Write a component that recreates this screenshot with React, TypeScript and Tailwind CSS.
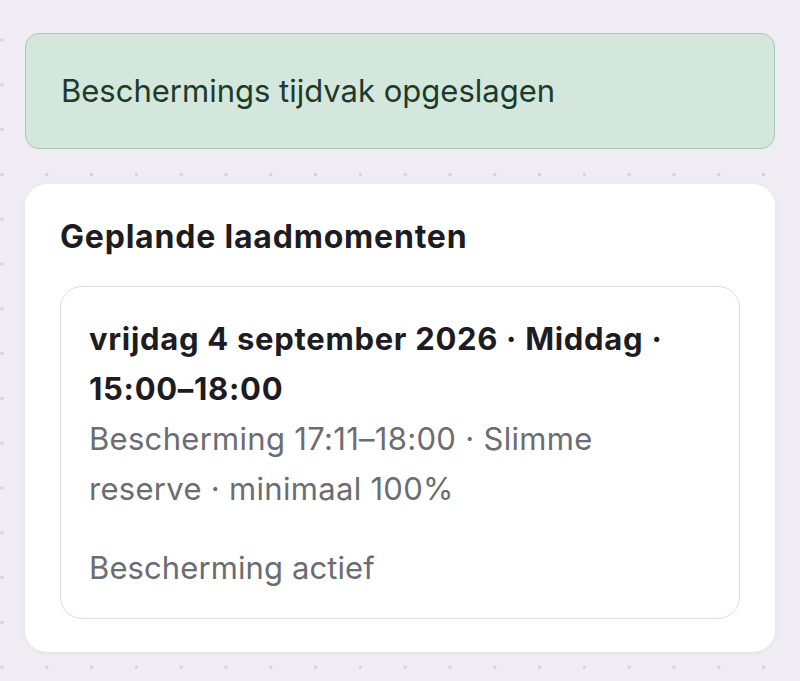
import React from "react";

export default function App() {
  return (
    <div
      className="min-h-screen w-full bg-[#efedf3] bg-[radial-gradient(circle,#d5d2da_1.4px,transparent_1.9px)] bg-[length:44.8px_44.8px] bg-[position:-20.4px_17.6px]"
      style={{ fontFamily: "Inter, 'Noto Sans', sans-serif" }}
    >
      <div className="flex flex-col gap-[35px] px-[25px] pt-[33px]">
        <div className="flex h-[116px] items-center rounded-[14px] border-[1.5px] border-[#a6c8b3] bg-[#d4e7dc] px-[35px] text-[31px] leading-[40px] text-[#1d3a2b]">
          Beschermings tijdvak opgeslagen
        </div>
        <div className="rounded-[22px] bg-white px-[35px] pb-[33px] pt-[33px] shadow-[0_1px_4px_rgba(60,50,90,0.06)]">
          <h2 className="text-[32px] font-bold leading-[40px] tracking-[0.8px] text-[#1c1c22]">
            Geplande laadmomenten
          </h2>
          <div className="mt-[29px] rounded-[22px] border-[1.5px] border-[#dedde2] px-[28px] pb-[25px] pt-[27px]">
            <div className="text-[31px] font-bold leading-[50px] tracking-[0.7px] text-[#1c1c22]">
              vrijdag 4 september 2026 · Middag ·
              <br />
              15:00–18:00
            </div>
            <div className="text-[31px] leading-[50px] tracking-[0.3px] text-[#6c6c73]">
              Bescherming 17:11–18:00 · Slimme
              <br />
              reserve · minimaal 100%
            </div>
            <div className="mt-[29px] text-[31px] leading-[50px] tracking-[0.1px] text-[#6c6c73]">
              Bescherming actief
            </div>
          </div>
        </div>
      </div>
    </div>
  );
}
